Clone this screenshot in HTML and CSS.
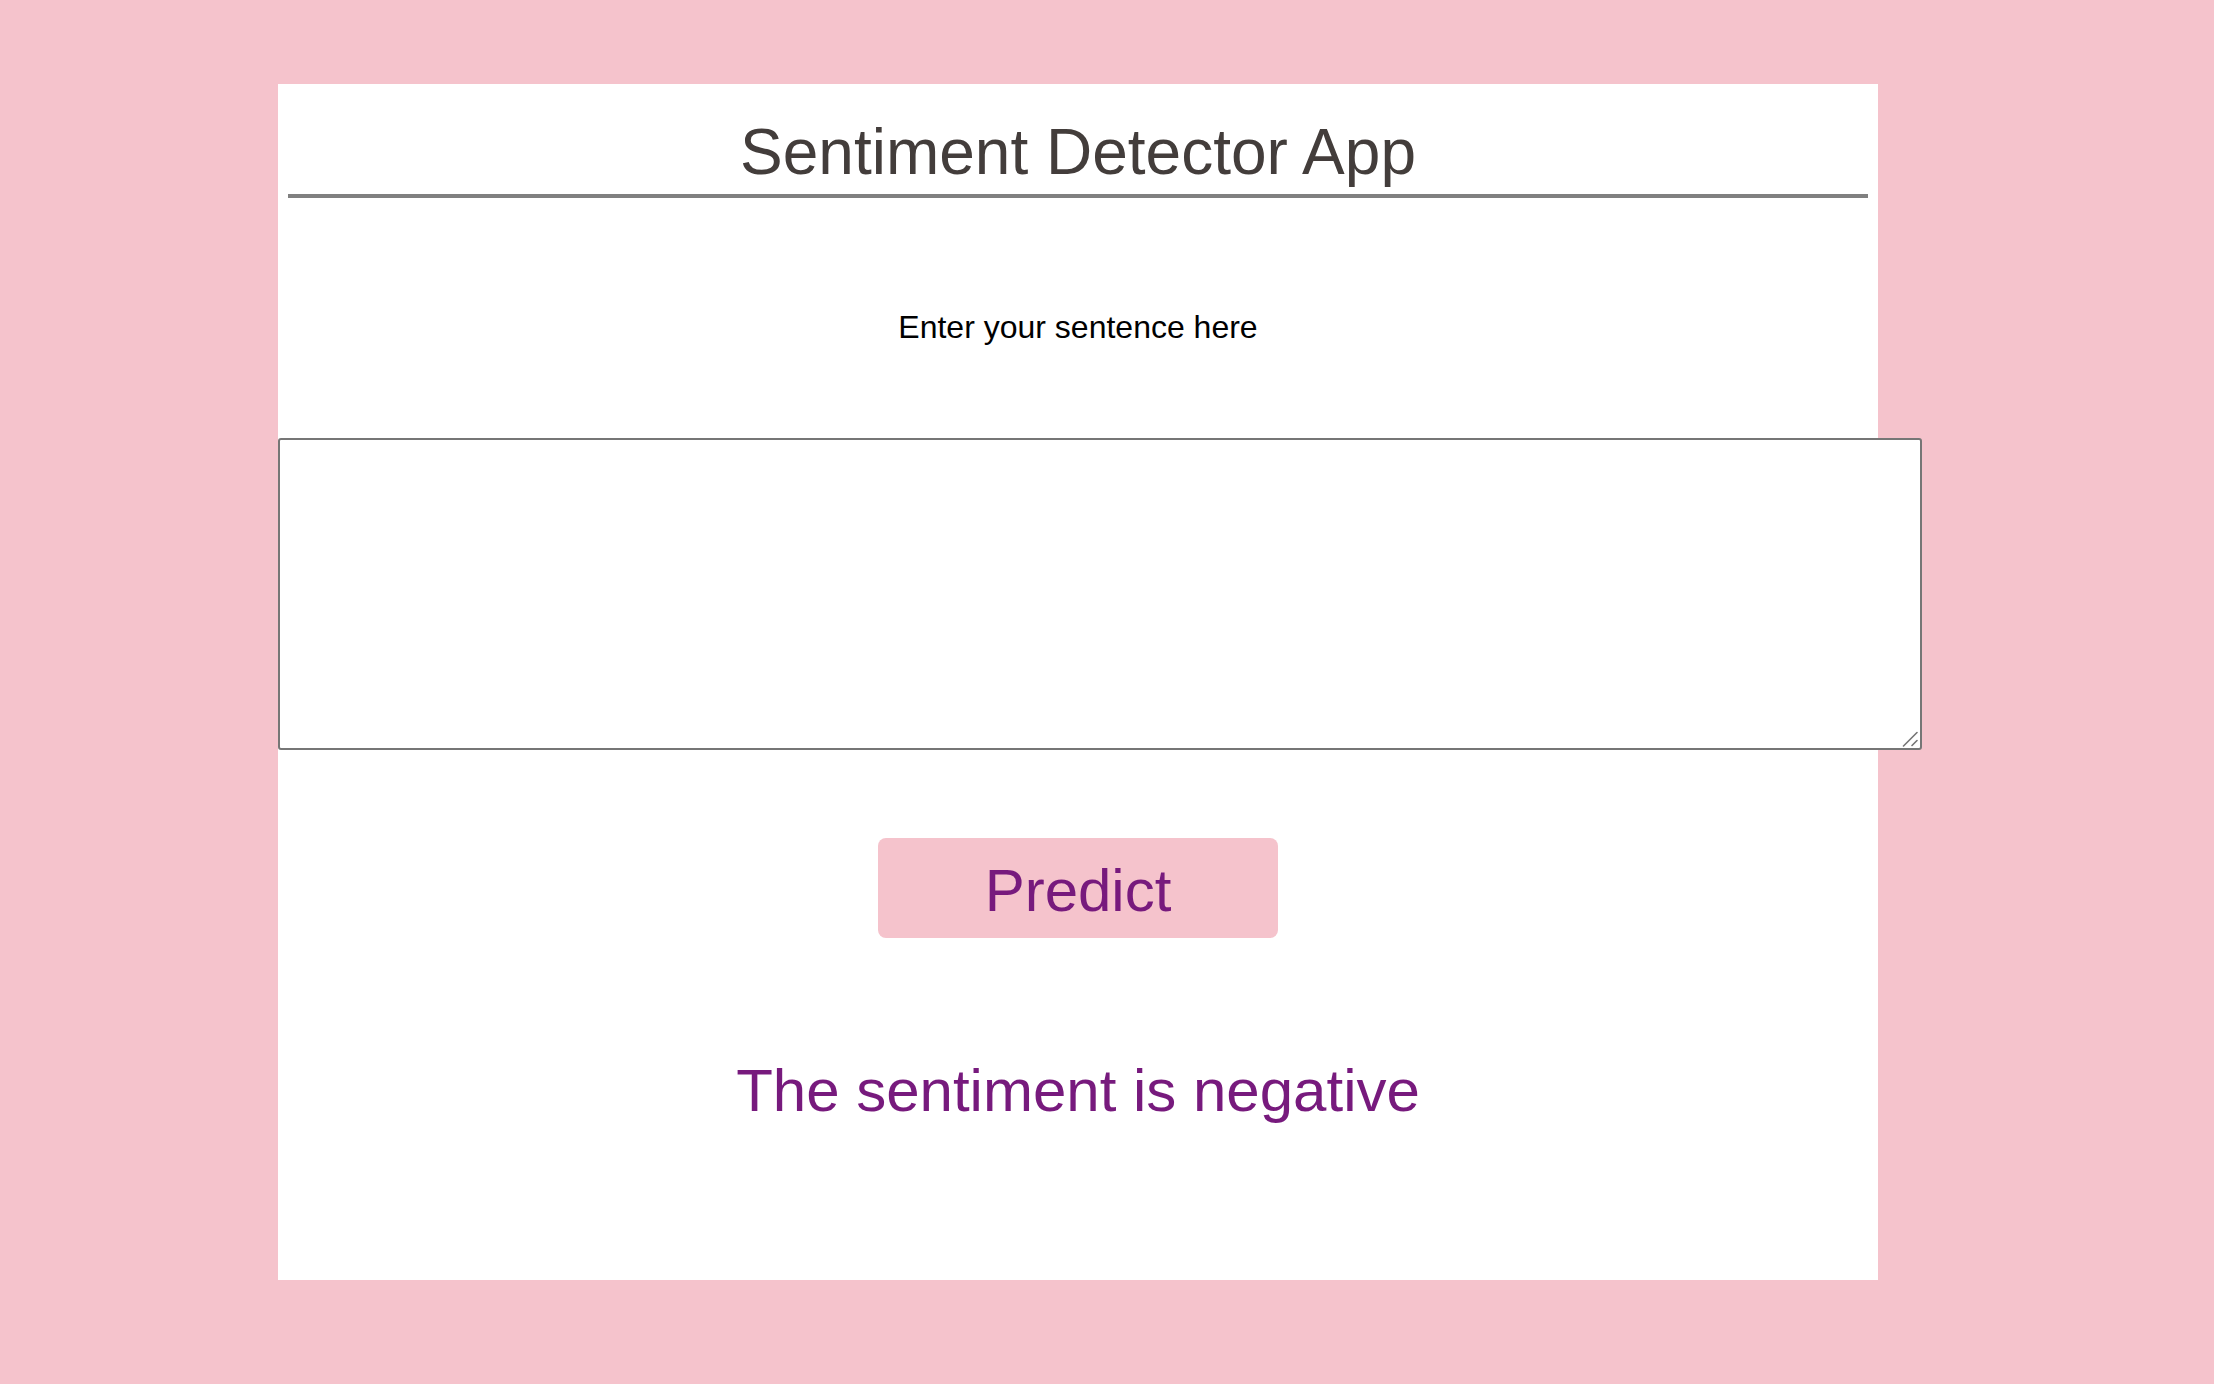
FILE: index.html
```html
<!DOCTYPE html>
<html lang="en">
<head>
<meta charset="utf-8">
<title>Sentiment Detector App</title>
<link rel="stylesheet" href="styles.css">
</head>
<body>
  <main class="card">
    <h1 class="title">Sentiment Detector App</h1>
    <div class="rule"></div>
    <p class="label">Enter your sentence here</p>
    <div class="field">
      <textarea class="input" aria-label="Enter your sentence here"></textarea>
      <svg class="grip" width="16" height="16" viewBox="0 0 16 16" aria-hidden="true">
        <path d="M1.5 15 L15 1.5 M10 14.5 L15 9.5" stroke="#767676" stroke-width="1.6" fill="none" stroke-linecap="round"/>
      </svg>
    </div>
    <button class="predict" type="button">Predict</button>
    <p class="result">The sentiment is negative</p>
  </main>
</body>
</html>
```

FILE: styles.css
```css
html, body {
  margin: 0;
  padding: 0;
}

body {
  background: #f5c3cc;
  font-family: "Liberation Sans", Arial, Helvetica, sans-serif;
  min-height: 1384px;
  overflow: hidden;
}

.card {
  box-sizing: border-box;
  width: 1600px;
  height: 1196px;
  margin: 84px 0 0 278px;
  padding-top: 30px;
  background: #ffffff;
  display: flex;
  flex-direction: column;
  align-items: stretch;
}

.title {
  margin: 0;
  font-size: 64px;
  line-height: 76px;
  font-weight: 400;
  color: #433d3b;
  text-align: center;
}

.rule {
  height: 4px;
  margin: 4px 10px 0;
  background: #808080;
}

.label {
  margin: 109px 0 0;
  font-size: 32px;
  line-height: 40px;
  color: #000000;
  text-align: center;
}

.field {
  position: relative;
  width: 1644px;
  height: 312px;
  margin-top: 91px;
}

.input {
  display: block;
  box-sizing: border-box;
  width: 100%;
  height: 100%;
  margin: 0;
  border: 2px solid #767676;
  border-radius: 3px;
  background: #ffffff;
  resize: none;
  font-family: "Liberation Sans", Arial, sans-serif;
  font-size: 26px;
}

.grip {
  position: absolute;
  right: 4px;
  bottom: 3px;
}

.predict {
  box-sizing: border-box;
  align-self: center;
  width: 400px;
  height: 100px;
  margin-top: 88px;
  padding: 6px 0 0;
  border: 0;
  border-radius: 8px;
  background: #f5c3cc;
  color: #771a7d;
  font-family: "Liberation Sans", Arial, sans-serif;
  font-size: 60px;
  line-height: 94px;
  text-align: center;
  cursor: pointer;
}

.result {
  margin: 117px 0 0;
  font-size: 60px;
  line-height: 72px;
  color: #771a7d;
  text-align: center;
}
```
